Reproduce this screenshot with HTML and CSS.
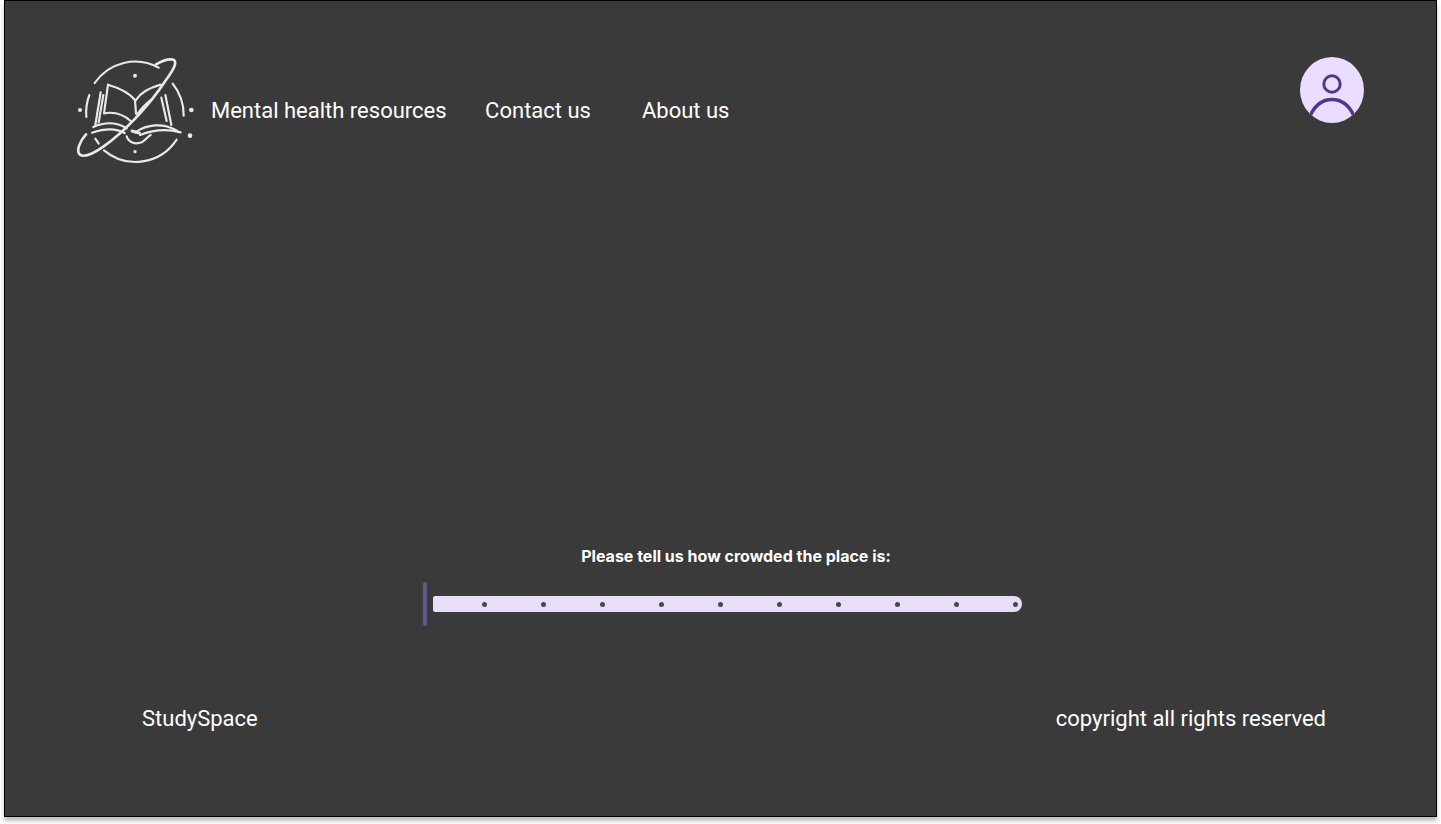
FILE: index.html
```html
<!DOCTYPE html>
<html lang="en">
<head>
<meta charset="utf-8">
<title>StudySpace</title>
<link rel="stylesheet" href="styles.css">
</head>
<body>
<div class="frame">
  <header class="header">
    <svg class="logo" viewBox="0 0 450 390" fill="none" stroke="#e9e9e9" stroke-width="6.500" stroke-linecap="round" stroke-linejoin="round">
      <path d="M296 68A148 150 0 0 0 104 114"/>
      <path d="M88 150A148 150 0 0 0 79 216"/>
      <path d="M338 116A148 150 0 0 1 371 212"/>
      <path d="M350 284A148 150 0 0 1 132 316"/>
      <path d="M106 281L116 296"/>
      <path d="M78 268C58 290 48 318 60 329C72 338 100 326 130 305C190 262 262 190 318 105C345 68 355 45 335 43C322 42 305 48 288 58" stroke-width="8"/>
      <path d="M144 119C175 128 205 140 225 165L228 206M144 119L132 205C160 200 190 208 212 228"/>
      <path d="M228 165C240 145 270 128 302 119"/>
      <path d="M232 208C244 190 258 176 274 164"/>
      <path d="M122 142L106 240"/>
      <path d="M130 150L116 232"/>
      <path d="M316 150L334 240"/>
      <path d="M304 158L320 228"/>
      <path d="M100 246C135 230 172 232 200 250"/>
      <path d="M96 263C135 250 170 250 194 264"/>
      <path d="M226 262C260 238 310 232 352 258"/>
      <path d="M240 270C280 254 325 252 362 262"/>
      <path d="M200 274C205 292 225 300 245 292C255 286 262 276 272 270"/>
      <path d="M216 258L238 264" stroke-width="9"/>
      <circle cx="225" cy="92" r="6" fill="#e9e9e9" stroke="none"/>
      <circle cx="60" cy="195" r="6" fill="#e9e9e9" stroke="none"/>
      <circle cx="394" cy="195" r="7" fill="#e9e9e9" stroke="none"/>
      <circle cx="390" cy="272" r="7" fill="#e9e9e9" stroke="none"/>
      <circle cx="225" cy="320" r="5" fill="#e9e9e9" stroke="none"/>
    </svg>
    <nav class="nav">
      <a class="nav-link nav-health">Mental health resources</a>
      <a class="nav-link nav-contact">Contact us</a>
      <a class="nav-link">About us</a>
    </nav>
    <svg class="avatar" viewBox="0 0 64 66" fill="none">
      <ellipse cx="32" cy="33" rx="32" ry="33" fill="#eaddff"/>
      <clipPath id="avatar-clip"><ellipse cx="32" cy="33" rx="32" ry="33"/></clipPath>
      <circle cx="32" cy="27" r="8.200" stroke="#4f378a" stroke-width="3"/>
      <path d="M10 59C15 48 23 42.500 32 42.500C41 42.500 49 48 54 59" stroke="#4f378a" stroke-width="3.400" clip-path="url(#avatar-clip)"/>
    </svg>
  </header>
  <main class="main">
    <p class="prompt">Please tell us how crowded the place is:</p>
    <div class="slider">
      <span class="thumb"></span>
      <div class="track">
        <i class="dot"></i><i class="dot"></i><i class="dot"></i><i class="dot"></i><i class="dot"></i>
        <i class="dot"></i><i class="dot"></i><i class="dot"></i><i class="dot"></i><i class="dot"></i>
      </div>
    </div>
  </main>
  <footer class="footer">
    <span>StudySpace</span>
    <span>copyright all rights reserved</span>
  </footer>
</div>
</body>
</html>
```

FILE: styles.css
```css
* { box-sizing: border-box; }

html, body {
  margin: 0;
  height: 100%;
  background: #ffffff;
  overflow: hidden;
}

.frame {
  width: 1433px;
  height: 817px;
  margin-left: 4px;
  border: 1px solid #000000;
  background: #3a3a3a;
  box-shadow: 0 4px 4px rgba(0, 0, 0, 0.25);
  display: flex;
  flex-direction: column;
  padding-top: 44px;
  color: #ffffff;
  font-family: Roboto, "Liberation Sans", sans-serif;
}

.header {
  display: flex;
  align-items: center;
  height: 130px;
  padding-left: 55px;
  padding-right: 72px;
}

.logo {
  width: 150px;
  height: 130px;
  flex: none;
}

.nav {
  display: flex;
  align-items: center;
  margin-left: 1px;
  padding-top: 2px;
}

.nav-link {
  font-size: 22px;
  line-height: 28px;
  white-space: nowrap;
}

.nav-health { margin-right: 38.500px; }
.nav-contact { margin-right: 51px; }

.avatar {
  width: 64px;
  height: 66px;
  margin-left: auto;
  align-self: flex-start;
  margin-top: 12px;
  flex: none;
}

.main {
  flex: 1;
  display: flex;
  flex-direction: column;
  align-items: flex-start;
  padding-left: 418px;
  padding-top: 372px;
}

.prompt {
  margin: 0;
  width: 626px;
  text-align: center;
  font-family: Inter, "Liberation Sans", sans-serif;
  font-weight: 700;
  font-size: 16px;
  line-height: 18px;
}

.slider {
  display: flex;
  align-items: center;
  gap: 6px;
  margin-top: 17px;
  height: 44px;
}

.thumb {
  width: 4px;
  height: 44px;
  border-radius: 2px;
  background: #65558f;
}

.track {
  width: 589px;
  height: 16px;
  border-radius: 2px 8px 8px 2px;
  background: #e8def8;
  display: flex;
  align-items: center;
  justify-content: space-between;
  padding: 0 3.500px 0 48.500px;
}

.dot {
  width: 5px;
  height: 5px;
  border-radius: 50%;
  background: #4a4458;
}

.footer {
  display: flex;
  justify-content: space-between;
  padding: 0 110px 83px 137px;
  font-size: 22px;
  line-height: 28px;
}
```
